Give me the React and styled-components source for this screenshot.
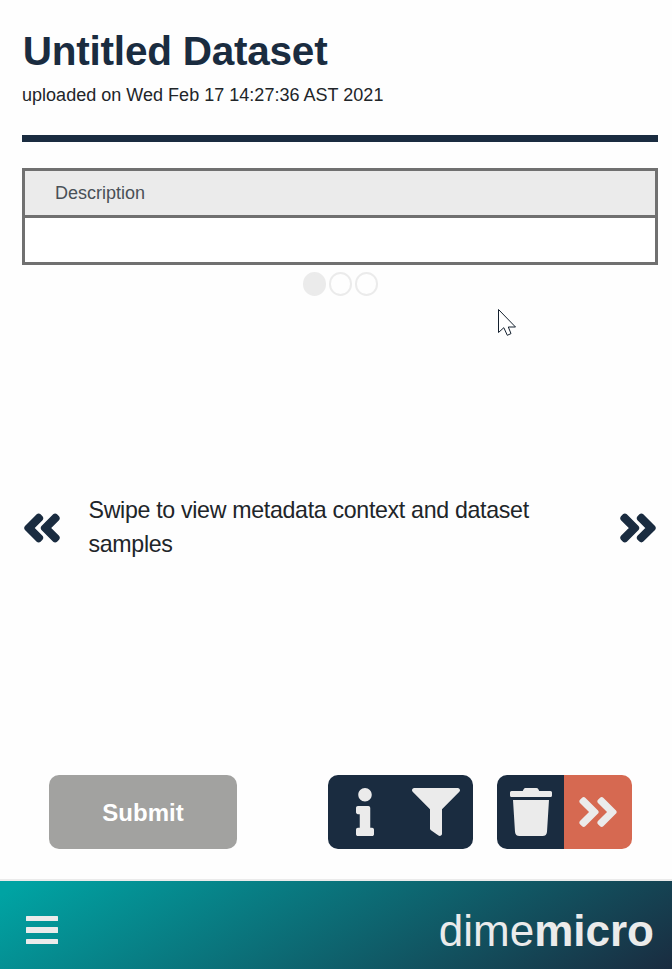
import React from 'react';
import styled, { createGlobalStyle } from 'styled-components';
import {
  FaAngleDoubleLeft,
  FaAngleDoubleRight,
  FaInfo,
  FaFilter,
  FaTrash,
} from 'react-icons/fa';

const navy = '#1a2c40';
const light = '#ebebeb';

const GlobalStyle = createGlobalStyle`
  *, *::before, *::after { box-sizing: border-box; }
  body {
    margin: 0;
    background: #fefefe;
    color: #212529;
    font-family: "Liberation Sans", Arial, sans-serif;
  }
`;

const Page = styled.div`
  display: flex;
  flex-direction: column;
  height: 969px;
  width: 672px;
  overflow: hidden;
`;

const Header = styled.header`
  margin: 27px 14px 0 22px;
  height: 115px;
  border-bottom: 7px solid ${navy};
`;

const Title = styled.h1`
  margin: 0;
  padding-left: 0.8px;
  font-size: 40.5px;
  line-height: 48px;
  letter-spacing: -0.23px;
  white-space: nowrap;
  color: ${navy};
`;

const Uploaded = styled.p`
  margin: 7px 0 0;
  font-size: 18px;
  line-height: 27px;
  letter-spacing: 0.02px;
  white-space: nowrap;
`;

const Table = styled.section`
  margin: 26px 14px 0 22px;
  height: 97px;
  flex: none;
  border: 3px solid #707070;
  display: grid;
  grid-template-rows: 47px 44px;
`;

const TableHead = styled.div`
  display: flex;
  align-items: center;
  padding: 0 30px;
  background: ${light};
  border-bottom: 3px solid #707070;
  color: #495057;
  font-size: 18px;
`;

const TableBody = styled.div`
  background: #fff;
`;

const Dots = styled.div`
  display: flex;
  justify-content: center;
  gap: 2.5px;
  margin: 7px 0 0 9px;
`;

const Dot = styled.span`
  width: 23.4px;
  height: 24px;
  border-radius: 50%;
  border: 2px solid ${light};
  background: ${(p) => (p.$active ? light : 'transparent')};
`;

const SwipeHint = styled.section`
  display: flex;
  align-items: center;
  height: 70px;
  margin: 197px 11px 0 19px;
  color: ${navy};

  svg {
    padding: 1px;
    overflow: visible;
    stroke-width: 16px;
    stroke-linejoin: round;
  }
`;

const HintText = styled.p`
  flex: 1;
  margin: 0;
  padding: 0 60px 2px 23.5px;
  color: #212529;
  font-size: 23.2px;
  line-height: 34px;
  letter-spacing: -0.32px;
`;

const Actions = styled.div`
  display: flex;
  height: 74px;
  margin: 212px 40px 0 49px;
`;

const SubmitButton = styled.button`
  width: 188px;
  margin-right: 91px;
  padding: 2px 0 0;
  border: 0;
  border-radius: 10px;
  background: #a2a2a0;
  color: #fff;
  font: bold 24px "Liberation Sans", Arial, sans-serif;
`;

const ButtonGroup = styled.div`
  display: flex;
  width: ${(p) => p.$width}px;
  margin-right: 24px;
  flex: none;
  border-radius: 10px;
  overflow: hidden;
  &:last-child { margin-right: 0; }
`;

const IconButton = styled.button`
  display: flex;
  align-items: center;
  justify-content: center;
  width: ${(p) => p.$width}px;
  padding: 0 ${(p) => p.$inset || 0}px 0 0;
  border: 0;
  background: ${(p) => (p.$accent ? '#d66951' : navy)};
  color: ${light};
`;

const Footer = styled.footer`
  display: flex;
  align-items: center;
  justify-content: space-between;
  height: 90px;
  margin-top: auto;
  padding: 12px 18px 0 26px;
  border-top: 2px solid ${light};
  background: linear-gradient(150deg, #00a3a3 3%, ${navy} 100%) padding-box;
`;

const MenuButton = styled.button`
  display: grid;
  gap: 6px;
  width: 32px;
  padding: 0;
  margin-bottom: 2px;
  border: 0;
  background: none;
`;

const MenuBar = styled.span`
  height: 5.3px;
  border-radius: 0.5px;
  background: ${light};
`;

const Brand = styled.div`
  color: ${light};
  font-size: 44px;
  line-height: 50px;
  white-space: nowrap;
`;

const Pointer = styled.svg`
  position: absolute;
  left: 498px;
  top: 309px;
`;

export default function App() {
  return (
    <Page>
      <GlobalStyle />
      <Header>
        <Title>Untitled Dataset</Title>
        <Uploaded>uploaded on Wed Feb 17 14:27:36 AST 2021</Uploaded>
      </Header>
      <Table>
        <TableHead>Description</TableHead>
        <TableBody />
      </Table>
      <Dots>
        <Dot $active />
        <Dot />
        <Dot />
      </Dots>
      <SwipeHint>
        <FaAngleDoubleLeft size={46} />
        <HintText>Swipe to view metadata context and dataset samples</HintText>
        <FaAngleDoubleRight size={46} />
      </SwipeHint>
      <Actions>
        <SubmitButton>Submit</SubmitButton>
        <ButtonGroup $width={145}>
          <IconButton $width={73} aria-label="Info"><FaInfo size={48} /></IconButton>
          <IconButton $width={72} $inset={2} aria-label="Filter"><FaFilter size={48} /></IconButton>
        </ButtonGroup>
        <ButtonGroup $width={135}>
          <IconButton $width={67} aria-label="Delete"><FaTrash size={48} /></IconButton>
          <IconButton $width={68} $accent aria-label="Next"><FaAngleDoubleRight size={48} /></IconButton>
        </ButtonGroup>
      </Actions>
      <Footer>
        <MenuButton aria-label="Menu">
          <MenuBar />
          <MenuBar />
          <MenuBar />
        </MenuButton>
        <Brand>dime<b>micro</b></Brand>
      </Footer>
      <Pointer width="19" height="28" viewBox="0 0 19 28">
        <path
          d="M.5.5V23.5L5.8 18.7L9.3 26.3L13 24.6L10.3 18H17.5Z"
          fill="#fff"
          stroke="#14202e"
          strokeWidth="1"
        />
      </Pointer>
    </Page>
  );
}
